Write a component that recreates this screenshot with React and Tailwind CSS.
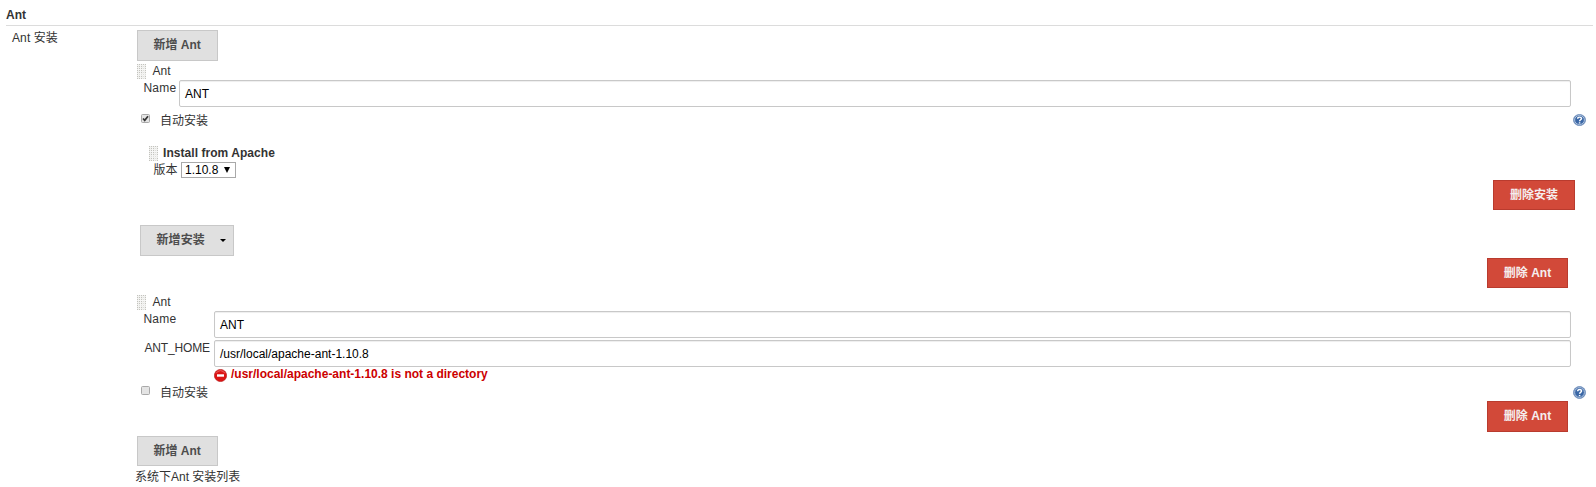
import React from 'react';

function Grip() {
  return (
    <svg className="block shrink-0" width="9" height="15" shapeRendering="crispEdges">
      <path d="M0 0H9V15H0Z" fill="#f1f1ef" />
      {[0, 2, 4, 6, 8, 10, 12, 14].map((y) =>
        [0, 2, 4, 6, 8].map((x) => (
          <rect key={`${x}-${y}`} x={x} y={y} width="1" height="1" fill="#c3c3be" />
        ))
      )}
      <path d="M3 0V15M6 0V15M0 5H9M0 10H9" transform="translate(.5 .5)" stroke="#fff" strokeOpacity=".45" />
    </svg>
  );
}

function Help({ height = 13 }) {
  return (
    <svg className="block shrink-0" width="13" height={height} viewBox="0 0 13 13" preserveAspectRatio="none">
      <circle cx="6.5" cy="6.5" r="6" fill="#3a67a6" stroke="#7d99c2" strokeWidth="1" />
      <circle cx="6.5" cy="6.5" r="4.9" fill="none" stroke="#b3c6df" strokeWidth="1" />
      <path d="M4.7 5.2C4.7 2.8 8.5 2.9 8.5 5C8.5 6.3 6.6 6.3 6.6 7.8M6.6 8.9V10.2" fill="none" stroke="#fff" strokeWidth="1.5" />
    </svg>
  );
}

function ErrorIcon() {
  return (
    <svg className="block shrink-0" width="13" height="13" viewBox="0 0 13 13">
      <circle cx="6.5" cy="6.5" r="6.1" fill="#dc1414" stroke="#b91717" strokeWidth=".7" />
      <path d="M2.2 4.3A4.8 4.8 0 0 1 10.8 4.3" fill="none" stroke="#ee6161" strokeWidth="1" />
      <rect x="3" y="5.3" width="7" height="2.4" fill="#fff" />
    </svg>
  );
}

function Checkbox({ checked }) {
  return (
    <svg className="block shrink-0" width="9" height="9" viewBox="0 0 9 9">
      <rect x=".5" y=".5" width="8" height="8" rx="1" fill="#e4e4e4" stroke="#a9a9a9" />
      {checked && <path d="M2 4.5L3.7 6.4L7 2.2" fill="none" stroke="#333" strokeWidth="1.7" />}
    </svg>
  );
}

function Button({ className = '', children }) {
  return (
    <button className={`flex shrink-0 items-center border border-[#c8c8c8] bg-[#e0e0e0] pl-[15.5px] font-bold whitespace-nowrap text-[#4d4d4d] ${className}`}>
      {children}
    </button>
  );
}

function DeleteButton({ className = '', children }) {
  return (
    <button className={`flex shrink-0 items-center justify-center border border-[#b93b2e] bg-[#d24939] font-bold whitespace-nowrap text-[#f5eeee] ${className}`}>
      {children}
    </button>
  );
}

function Field({ children }) {
  return (
    <div className="flex h-[27px] min-w-0 flex-1 items-center rounded-[2px] border border-[#c8c8c8] bg-white pl-[5px] text-black shadow-[inset_0_1px_1px_rgba(0,0,0,0.07)]">
      {children}
    </div>
  );
}

function InstallRow({ checked, helpHeight }) {
  return (
    <div className="flex h-[13px] items-start pr-[10px] pl-[4px]">
      <Checkbox checked={checked} />
      <span className="ml-[10px] leading-[14px]">自动安装</span>
      <div className="ml-auto">
        <Help height={helpHeight} />
      </div>
    </div>
  );
}

export default function App() {
  return (
    <main className="h-[487px] w-[1596px] overflow-hidden bg-white font-['Liberation_Sans','Noto_Sans_CJK_SC',sans-serif] text-[12px] leading-[14px] text-[#333]">
      <header className="mx-[6px] mr-[3px] flex h-[26px] items-end border-b border-[#dcdcdc] pb-[3px] font-bold">
        <h1>Ant</h1>
      </header>
      <div className="flex">
        <div className="w-[137px] shrink-0 pt-[5px] pl-[12px] tracking-[0.1px]">Ant 安装</div>
        <div className="flex min-w-0 flex-1 flex-col pt-[4px]">
          <Button className="h-[31px] w-[81px] pb-px">新增 Ant</Button>
          <div className="mt-[3px] flex h-[15px]">
            <Grip />
            <span className="ml-[6.5px]">Ant</span>
          </div>
          <div className="mt-[1px] flex pr-[25px] pl-[6.5px]">
            <span className="w-[35.5px] shrink-0 pt-px tracking-[0.2px]">Name</span>
            <Field>ANT</Field>
          </div>
          <div className="mt-[7px]">
            <InstallRow checked helpHeight={12} />
          </div>
          <div className="mt-[19px] flex h-[15px] pl-[12px]">
            <Grip />
            <b className="ml-[5px] tracking-[0.05px]">Install from Apache</b>
          </div>
          <div className="mt-[1px] flex h-[16px] pl-[16.5px]">
            <span className="w-[27.5px] shrink-0 pt-px">版本</span>
            <div className="flex w-[55px] items-center justify-between border border-[#a9a9a9] pr-[5px] pl-[3px] text-black">
              <span>1.10.8</span>
              <svg width="6" height="6"><path d="M0 0H6L3 6Z" /></svg>
            </div>
          </div>
          <DeleteButton className="mt-[2px] mr-[21px] h-[30px] w-[82px] self-end">删除安装</DeleteButton>
          <Button className="mt-[15px] ml-[3px] h-[31px] w-[94px] pb-px">
            <span className="tracking-[0.1px]">新增安装</span>
            <svg className="ml-[15px]" width="6" height="3"><path d="M0 0H6L3 3Z" fill="#000" /></svg>
          </Button>
          <DeleteButton className="mt-[2px] mr-[28px] h-[30px] w-[81px] self-end">删除 Ant</DeleteButton>
          <div className="mt-[7px] flex h-[15px]">
            <Grip />
            <span className="ml-[6.5px]">Ant</span>
          </div>
          <div className="mt-[1px] flex pr-[25px] pl-[6.5px]">
            <span className="w-[70.5px] shrink-0 pt-px tracking-[0.2px]">Name</span>
            <Field>ANT</Field>
          </div>
          <div className="mt-[2px] flex pr-[25px] pl-[7.5px]">
            <span className="w-[69.5px] shrink-0 pt-px tracking-[-0.15px]">ANT_HOME</span>
            <Field>/usr/local/apache-ant-1.10.8</Field>
          </div>
          <div className="mt-[2px] flex h-[13px] pl-[77px] font-bold text-[#c00]">
            <ErrorIcon />
            <span className="ml-[4px] leading-[10px]">/usr/local/apache-ant-1.10.8 is not a directory</span>
          </div>
          <div className="mt-[4px]">
            <InstallRow />
          </div>
          <DeleteButton className="mt-[2px] mr-[28px] h-[31px] w-[81px] self-end pb-px">删除 Ant</DeleteButton>
          <Button className="mt-[4px] h-[30px] w-[81px]">新增 Ant</Button>
          <div className="-ml-[2px] pt-[4px]">系统下Ant 安装列表</div>
        </div>
      </div>
    </main>
  );
}
